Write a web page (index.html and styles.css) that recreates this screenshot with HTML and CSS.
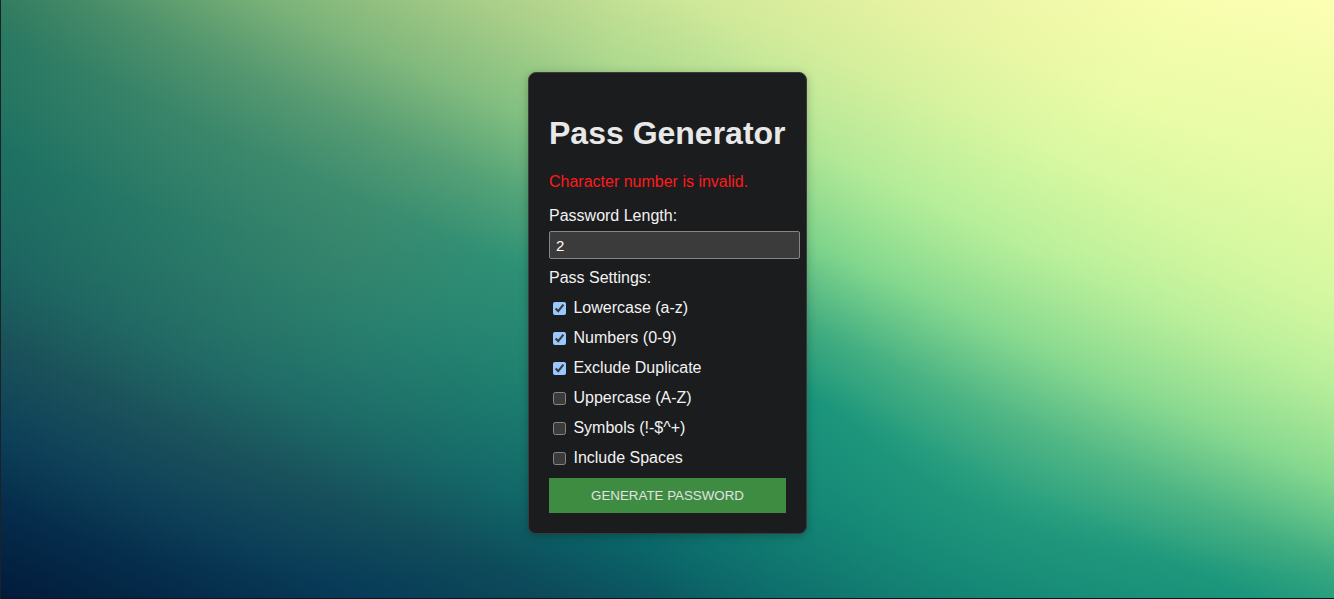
FILE: index.html
```html
<!DOCTYPE html>
<html lang="en">
<head>
<meta charset="utf-8">
<title>Pass Generator</title>
<link rel="stylesheet" href="styles.css">
</head>
<body>
  <main class="card">
    <h1 class="title">Pass Generator</h1>
    <p class="error">Character number is invalid.</p>
    <label class="field-label" for="len">Password Length:</label>
    <input class="len-input" id="len" type="text" value="2">
    <div class="settings-label">Pass Settings:</div>
    <div class="options">
      <label class="option"><input type="checkbox" checked> Lowercase (a-z)</label>
      <label class="option"><input type="checkbox" checked> Numbers (0-9)</label>
      <label class="option"><input type="checkbox" checked> Exclude Duplicate</label>
      <label class="option"><input type="checkbox"> Uppercase (A-Z)</label>
      <label class="option"><input type="checkbox"> Symbols (!-$^+)</label>
      <label class="option"><input type="checkbox"> Include Spaces</label>
    </div>
    <button class="generate" type="button">GENERATE PASSWORD</button>
  </main>
</body>
</html>
```
FILE: styles.css
```css
html, body {
  margin: 0;
  height: 100%;
}

body {
  box-sizing: border-box;
  min-height: 100vh;
  display: flex;
  align-items: center;
  justify-content: center;
  padding-top: 8px;
  font-family: "Liberation Sans", Arial, sans-serif;
  color-scheme: dark;
  border-left: 1px solid #1a2226;
  border-bottom: 1px solid #121417;
  background:
    radial-gradient(ellipse 560px 300px at 100% 46%, rgba(215, 250, 160, 0.5), rgba(215, 250, 160, 0) 100%),
    radial-gradient(ellipse 420px 240px at 78% 82%, rgba(70, 185, 135, 0.3), rgba(70, 185, 135, 0) 100%),
    radial-gradient(ellipse 520px 330px at 26% 42%, rgba(120, 140, 100, 0.35), rgba(120, 140, 100, 0) 100%),
    radial-gradient(ellipse 640px 260px at 40% 0, rgba(190, 190, 130, 0.35), rgba(190, 190, 130, 0) 100%),
    radial-gradient(ellipse 620px 420px at 0 0, rgba(45, 65, 50, 0.4), rgba(45, 65, 50, 0) 100%),
    linear-gradient(to right top,
      #021a3b 0%,
      #083c58 14%,
      #0d4a5a 21%,
      #0a6468 28%,
      #0b7c72 37%,
      #16917a 47%,
      #3aa97f 53%,
      #7ad48c 60%,
      #b0ec98 68%,
      #daf8a2 77%,
      #eefca8 84%,
      #ffffb3 100%);
}

.card {
  width: 237px;
  padding: 20px;
  background: #1b1c1e;
  border: 1px solid #3a3b3d;
  border-radius: 8px;
  box-shadow: 0 2px 10px rgba(0, 0, 0, 0.25);
  display: flex;
  flex-direction: column;
  align-items: flex-start;
  color: #f2f2f2;
}

.title {
  margin: 21.44px 0;
  font-size: 32px;
  font-weight: bold;
  color: #e8e8e8;
  white-space: nowrap;
}

.error {
  margin: 0 0 16px;
  font-size: 16px;
  color: #ff1a1a;
}

.field-label {
  font-size: 16px;
  margin-bottom: 6px;
}

.len-input {
  box-sizing: content-box;
  width: 100%;
  margin: 0;
  padding: 5px 6px 4px;
  font-family: "Liberation Sans", Arial, sans-serif;
  font-size: 15px;
  line-height: normal;
  color: #ffffff;
  background: #3b3b3b;
  border: 1px solid #858585;
  border-radius: 2px;
  outline: none;
}

.settings-label {
  margin-top: 10px;
  font-size: 16px;
}

.options {
  margin-top: 6px;
  display: flex;
  flex-direction: column;
  align-self: stretch;
}

.option {
  height: 30px;
  display: flex;
  align-items: center;
  white-space: pre;
  font-size: 16px;
}

.option input {
  width: 13px;
  height: 13px;
  margin: 3px 3px 3px 4px;
}

.generate {
  align-self: stretch;
  margin-top: 4.5px;
  padding: 10px;
  border: none;
  border-radius: 0;
  background: #3e8c41;
  color: #e2e2e2;
  font-family: "Liberation Sans", Arial, sans-serif;
  font-size: 13.333px;
  cursor: pointer;
}
```
